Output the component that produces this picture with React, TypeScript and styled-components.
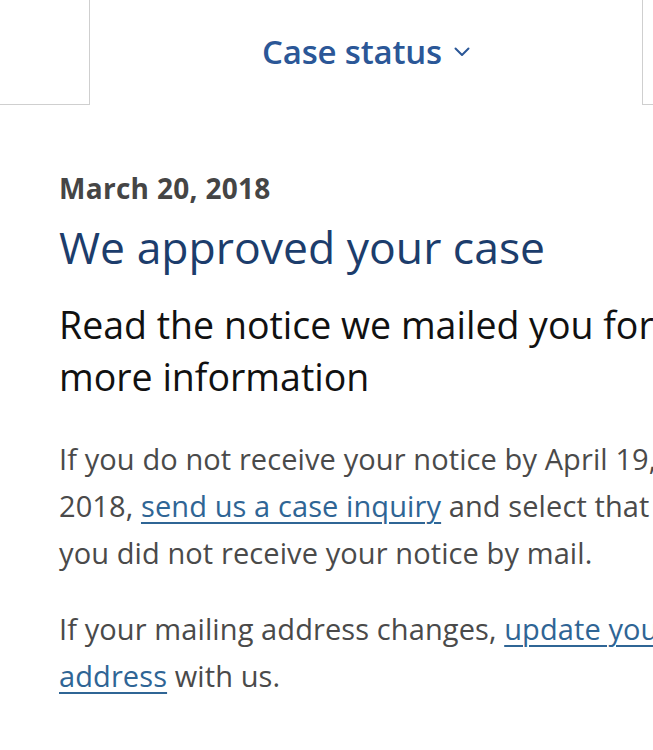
import styled, { createGlobalStyle } from 'styled-components'

const GlobalStyle = createGlobalStyle`
  html, body {
    margin: 0;
    padding: 0;
    background: #ffffff;
    overflow-x: hidden;
  }
  body {
    font-family: 'Open Sans', 'Liberation Sans', sans-serif;
  }
`

const Page = styled.div`
  width: 653px;
  overflow: hidden;
`

const TabBar = styled.div`
  display: flex;
  height: 105px;
`

const Tab = styled.div<{ $width?: number; $active?: boolean }>`
  flex: ${(p) => (p.$width ? `0 0 ${p.$width}px` : '1')};
  box-sizing: border-box;
  border-bottom: ${(p) => (p.$active ? 'none' : '1.5px solid #cfcfcf')};
  border-left: ${(p) => (p.$active ? '1.5px solid #cfcfcf' : 'none')};
  border-right: ${(p) => (p.$active ? '1.5px solid #cfcfcf' : 'none')};
  display: flex;
  align-items: center;
  justify-content: center;
  padding-bottom: 2px;
`

const TabLabel = styled.span`
  font-size: 33px;
  font-weight: 600;
  color: #2b5797;
  display: flex;
  align-items: center;
  gap: 12px;
  letter-spacing: -0.2px;
`

const Content = styled.div`
  padding: 65px 0 40px 59px;
`

const DateLine = styled.div`
  font-size: 28px;
  font-weight: 700;
  color: #454545;
  line-height: 36px;
  letter-spacing: 0.3px;
`

const Heading = styled.h1`
  margin: 13px 0 0;
  font-size: 44.5px;
  font-weight: 400;
  color: #1c3d6c;
  line-height: 56px;
`

const SubHeading = styled.h2`
  margin: 24px 0 0;
  font-size: 37.5px;
  font-weight: 400;
  color: #111111;
  line-height: 52px;
  white-space: nowrap;
`

const Body = styled.p`
  margin: 32px 0 0;
  font-size: 29px;
  color: #4a4a4a;
  line-height: 47px;
  white-space: nowrap;
  letter-spacing: 0.1px;

  & + & {
    margin-top: 29px;
  }
`

const Link = styled.a`
  color: #2f6595;
  text-decoration: underline;
  text-underline-offset: 5px;
  text-decoration-thickness: 1.5px;
`

const Chevron = () => (
  <svg width="16" height="10" viewBox="0 0 16 10" fill="none">
    <path d="M1.5 1.5 L8 8 L14.5 1.5" stroke="#2b5797" strokeWidth="2" strokeLinecap="round" strokeLinejoin="round" />
  </svg>
)

export default function App() {
  return (
    <Page>
      <GlobalStyle />
      <TabBar>
        <Tab $width={89} />
        <Tab $width={554} $active>
          <TabLabel>
            Case status <Chevron />
          </TabLabel>
        </Tab>
        <Tab />
      </TabBar>
      <Content>
        <DateLine>March 20, 2018</DateLine>
        <Heading>We approved your case</Heading>
        <SubHeading>
          Read the notice we mailed you for
          <br />
          more information
        </SubHeading>
        <Body>
          If you do not receive your notice by April 19,
          <br />
          2018, <Link href="#">send us a case inquiry</Link> and select that
          <br />
          you did not receive your notice by mail.
        </Body>
        <Body>
          If your mailing address changes, <Link href="#">update your</Link>
          <br />
          <Link href="#">address</Link> with us.
        </Body>
      </Content>
    </Page>
  )
}
